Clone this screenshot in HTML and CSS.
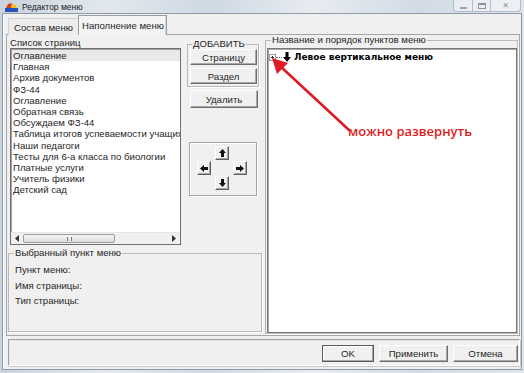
FILE: index.html
```html
<!DOCTYPE html>
<html lang="ru">
<head>
<meta charset="utf-8">
<title>Редактор меню</title>
<link rel="stylesheet" href="styles.css">
</head>
<body>
<div class="frame">
  <div class="titlebar">
    <svg class="app-icon" viewBox="0 0 13 9" width="13" height="9">
      <rect x="0" y="5" width="13" height="4" fill="#2a4fb8"/>
      <path d="M1 5 L3 1 L7 0 L6 5 Z" fill="#e03a1e"/>
      <path d="M6 5 L7 1 L11 2 L12 5 Z" fill="#f2c21a"/>
    </svg>
    <span class="title">Редактор меню</span>
    <div class="winbtns">
      <span class="wb min"><span class="min-glyph"></span></span>
      <span class="wb max"><span class="max-glyph"></span></span>
      <span class="wb close">✕</span>
    </div>
  </div>
  <div class="window">
    <div class="tabs">
      <div class="tab">Состав меню</div>
      <div class="tab active">Наполнение меню</div>
    </div>
    <div class="tabpanel">
      <div class="leftarea">
        <div class="toprow">
          <div class="listcol">
            <div class="label">Список страниц</div>
            <div class="listbox">
              <ul class="items">
                <li class="sel">Оглавление</li>
                <li>Главная</li>
                <li>Архив документов</li>
                <li>ФЗ-44</li>
                <li>Оглавление</li>
                <li>Обратная связь</li>
                <li>Обсуждаем ФЗ-44</li>
                <li>Таблица итогов успеваемости учащихся</li>
                <li>Наши педагоги</li>
                <li>Тесты для 6-а класса по биологии</li>
                <li>Платные услуги</li>
                <li>Учитель физики</li>
                <li>Детский сад</li>
              </ul>
              <div class="hscroll">
                <span class="sb-arrow"><svg viewBox="0 0 4 7" width="4" height="7"><path d="M4 0 L0 3.5 L4 7 Z" fill="#333"/></svg></span>
                <span class="sb-track"><span class="sb-thumb"><span class="grip"></span></span></span>
                <span class="sb-arrow"><svg viewBox="0 0 4 7" width="4" height="7"><path d="M0 0 L4 3.5 L0 7 Z" fill="#333"/></svg></span>
              </div>
            </div>
          </div>
          <div class="midcol">
            <fieldset class="group add">
              <legend>ДОБАВИТЬ</legend>
              <button class="btn wide">Страницу</button>
              <button class="btn wide">Раздел</button>
            </fieldset>
            <button class="btn del">Удалить</button>
            <div class="pad">
              <button class="abtn up"><svg viewBox="0 0 7 8" width="7" height="8"><path d="M3.5 0 L7 4 H5 V8 H2 V4 H0 Z" fill="#111"/></svg></button>
              <button class="abtn left"><svg viewBox="0 0 8 7" width="8" height="7"><path d="M0 3.5 L4 0 V2 H8 V5 H4 V7 Z" fill="#111"/></svg></button>
              <button class="abtn right"><svg viewBox="0 0 8 7" width="8" height="7"><path d="M8 3.5 L4 0 V2 H0 V5 H4 V7 Z" fill="#111"/></svg></button>
              <button class="abtn down"><svg viewBox="0 0 7 8" width="7" height="8"><path d="M3.5 8 L7 4 H5 V0 H2 V4 H0 Z" fill="#111"/></svg></button>
            </div>
          </div>
        </div>
        <fieldset class="group selected">
          <legend>Выбранный пункт меню</legend>
          <div class="field">Пункт меню:</div>
          <div class="field">Имя страницы:</div>
          <div class="field">Тип страницы:</div>
        </fieldset>
      </div>
      <fieldset class="group treegroup">
        <legend>Название и порядок пунктов меню</legend>
        <div class="tree">
          <div class="node">
            <span class="plus"></span>
            <span class="dots"></span>
            <svg class="node-icon" viewBox="0 0 8 10" width="8" height="10"><path d="M2.5 0 H5.5 V5 H8 L4 10 L0 5 H2.5 Z" fill="#000"/></svg>
            <span class="node-text">Левое вертикальное меню</span>
          </div>
        </div>
      </fieldset>
    </div>
    <div class="footer">
      <button class="btn fbtn ok">OK</button>
      <button class="btn fbtn apply">Применить</button>
      <button class="btn fbtn cancel">Отмена</button>
    </div>
  </div>
  <svg class="annot-arrow" viewBox="0 0 524 373" width="524" height="373">
    <line x1="349" y1="130" x2="280" y2="66" stroke="#de1b22" stroke-width="2.6" stroke-linecap="round"/>
    <path d="M272 58 L288 63 L277 74 Z" fill="#de1b22"/>
  </svg>
  <div class="annot-text">можно развернуть</div>
</div>
</body>
</html>
```

FILE: styles.css
```css
* { box-sizing: border-box; }
html, body { margin: 0; padding: 0; }
body {
  width: 524px;
  height: 373px;
  overflow: hidden;
  font-family: "Liberation Sans", Arial, sans-serif;
  font-size: 9.6px;
  color: #262626;
}
.frame {
  position: relative;
  width: 524px;
  height: 373px;
  padding: 0 2px 3px 2px;
  display: flex;
  flex-direction: column;
  background: linear-gradient(90deg, #c9d3de 0%, #e2e8ee 20%, #cfd9e3 40%, #e7ecf1 60%, #d2dbe5 80%, #dfe5eb 100%);
}
.titlebar {
  height: 13px;
  display: flex;
  align-items: center;
  padding-left: 3px;
  gap: 4px;
  flex: none;
}
.app-icon { display: block; margin-top: 2px; }
.title { font-size: 8.5px; color: #1e1e1e; margin-top: 1px; }
.winbtns {
  margin-left: auto;
  align-self: flex-start;
  display: flex;
  margin-right: 1px;
}
.wb {
  height: 12px;
  display: flex;
  align-items: center;
  justify-content: center;
  border: 1px solid #b4bec9;
  border-top: none;
  background: rgba(255, 255, 255, 0.45);
  color: #8c96a1;
  font-size: 8px;
  font-family: "DejaVu Sans", sans-serif;
}
.wb + .wb { border-left: none; }
.wb.min { width: 20px; border-bottom-left-radius: 3px; }
.wb.max { width: 18px; }
.wb.close { width: 30px; border-bottom-right-radius: 3px; }
.min-glyph { width: 7px; height: 2px; border: 1px solid #9aa3ad; margin-top: 5px; }
.max-glyph { width: 8px; height: 6px; border: 1px solid #8c96a1; border-top-width: 2px; }

.window {
  flex: 1;
  display: flex;
  flex-direction: column;
  background: #f0f0f0;
  border: 1px solid #8f9aa6;
  box-shadow: inset 1px 0 #fff;
}
.tabs {
  height: 21px;
  display: flex;
  align-items: flex-end;
  padding-left: 5px;
  margin-bottom: -1px;
  position: relative;
  z-index: 1;
  flex: none;
}
.tab {
  height: 17px;
  width: 70px;
  padding: 4px 0 0 5px;
  line-height: 10px;
  white-space: nowrap;
  border: 1px solid #d0d2d5;
  border-bottom: none;
  border-right: none;
  background: #ededed;
}
.tab.active {
  height: 20px;
  width: 89px;
  padding: 5px 0 0 3px;
  background: #f4f4f4;
  border: 1px solid #9a9ea5;
  border-bottom: none;
  box-shadow: inset -1px 0 #d8d8d8;
}
.tabpanel {
  flex: 1;
  margin: 0 1px 0 3px;
  border: 1px solid #a3a6ab;
  display: grid;
  grid-template-columns: 254px 253px;
  column-gap: 3px;
  padding: 0 1px;
}
.leftarea {
  display: flex;
  flex-direction: column;
}
.toprow {
  display: flex;
  padding-left: 2px;
  gap: 6px;
  height: 210px;
  flex: none;
}
.listcol { width: 171px; display: flex; flex-direction: column; }
.label { padding-top: 3px; line-height: 10px; height: 13px; white-space: nowrap; }
.listbox {
  flex: 1;
  display: flex;
  flex-direction: column;
  background: #fff;
  border: 1px solid #6e6e6e;
  box-shadow: inset 1px 1px #a0a0a0;
}
.items {
  flex: 1;
  list-style: none;
  margin: 0;
  padding: 1px 0 0 1px;
  overflow: hidden;
}
.items li {
  height: 11.2px;
  line-height: 11.2px;
  padding-left: 1px;
  white-space: nowrap;
  overflow: hidden;
}
.items li.sel { background: #e9e9e9; }
.hscroll {
  height: 12px;
  display: flex;
  background: #f0f0f0;
  border-top: 1px solid #e6e6e6;
  flex: none;
}
.sb-arrow {
  width: 12px;
  display: flex;
  align-items: center;
  justify-content: center;
}
.sb-track { flex: 1; display: flex; align-items: center; }
.sb-thumb {
  width: 92px;
  height: 9px;
  border: 1px solid #9c9c9c;
  border-radius: 2px;
  background: linear-gradient(#f6f6f6, #dcdcdc);
  display: flex;
  align-items: center;
  justify-content: center;
}
.grip { width: 5px; height: 4px; border-left: 1px solid #777; border-right: 1px solid #777; }

.midcol { width: 72px; display: flex; flex-direction: column; }
.group {
  margin: 0;
  border: 1px solid #b9b9b9;
  box-shadow: 1px 1px #fff;
}
.group legend {
  line-height: 10px;
  font-size: 9.6px;
  white-space: nowrap;
}
.add {
  margin-top: 4px;
  padding: 0 1px 2px 1px;
  display: flex;
  flex-direction: column;
  gap: 3px;
}
.add legend { margin-left: 3px; padding: 0 1px; }
.btn {
  font-family: "Liberation Sans", Arial, sans-serif;
  font-size: 9.6px;
  color: #262626;
  background: #f0f0f0;
  border: 1px solid;
  border-color: #fff #6d6d6d #6d6d6d #fff;
  box-shadow: inset -1px -1px #a8a8a8;
  padding: 0;
  margin: 0;
}
.btn.wide { width: 67px; height: 16px; margin-left: 1px; }
.btn.del { width: 68px; height: 18px; margin: 3px 0 0 3px; }
.pad {
  width: 68px;
  height: 54px;
  margin: 34px 0 0 2px;
  border: 1px solid #a6a6a6;
  box-shadow: inset 1px 1px #fff, 1px 1px #fff;
  display: grid;
  grid-template-columns: repeat(3, 14px);
  grid-template-rows: repeat(3, 14px);
  column-gap: 4px;
  row-gap: 1px;
  padding: 3px 0 0 7px;
}
.abtn {
  width: 14px;
  height: 14px;
  padding: 0;
  margin: 0;
  background: #f0f0f0;
  border: 1px solid;
  border-color: #fff #5f5f5f #5f5f5f #fff;
  box-shadow: inset -1px -1px #a8a8a8;
  display: flex;
  align-items: center;
  justify-content: center;
}
.abtn.up { grid-column: 2; grid-row: 1; }
.abtn.left { grid-column: 1; grid-row: 2; }
.abtn.right { grid-column: 3; grid-row: 2; }
.abtn.down { grid-column: 2; grid-row: 3; }

.selected {
  flex: 1;
  margin: 3px 0 3px 0;
  padding: 4px 6px 0 6px;
}
.selected legend { padding: 0 1px; margin-left: -1px; }
.field { line-height: 15.5px; }

.treegroup {
  margin: 0 0 1px 0;
  padding: 3px 0 0 1px;
  display: flex;
  flex-direction: column;
}
.treegroup legend { margin-left: 4px; padding: 0 1px; }
.tree {
  flex: 1;
  background: #fff;
  border: 1px solid #777;
  box-shadow: inset 1px 1px #a8a8a8;
  padding: 2px 0 0 1px;
}
.node {
  height: 12px;
  display: flex;
  align-items: center;
}
.plus {
  width: 7px;
  height: 7px;
  border: 1px solid #9a9a9a;
  flex: none;
  background:
    linear-gradient(#333, #333) center / 3px 1px no-repeat,
    linear-gradient(#333, #333) center / 1px 3px no-repeat;
}
.dots {
  width: 6px;
  height: 0;
  border-top: 1px dotted #777;
  flex: none;
}
.node-icon { flex: none; margin: 0 3px 0 1px; }
.node-text {
  font-family: "DejaVu Sans", Verdana, sans-serif;
  font-weight: bold;
  font-size: 9px;
  color: #000;
  white-space: nowrap;
}

.footer {
  height: 27px;
  margin: 3px 1px 3px 5px;
  border: 1px solid;
  border-color: #a0a0a0 #fff #fff #a0a0a0;
  box-shadow: 1px 1px #c8c8c8, inset 1px 1px #e4e4e4;
  display: flex;
  justify-content: flex-end;
  align-items: center;
  gap: 5px;
  padding: 1px 1px 0 0;
  flex: none;
}
.fbtn { height: 17px; }
.ok { width: 52px; border-color: #5a5a5a; box-shadow: inset -1px -1px #a8a8a8, inset 1px 1px #fff; }
.apply { width: 69px; }
.cancel { width: 65px; }

.annot-arrow {
  position: absolute;
  left: 0;
  top: 0;
  pointer-events: none;
}
.annot-text {
  position: absolute;
  left: 348px;
  top: 123px;
  font-family: "Open Sans", sans-serif;
  font-weight: 600;
  font-size: 13px;
  line-height: 16px;
  color: #de1b22;
  white-space: nowrap;
}
```
